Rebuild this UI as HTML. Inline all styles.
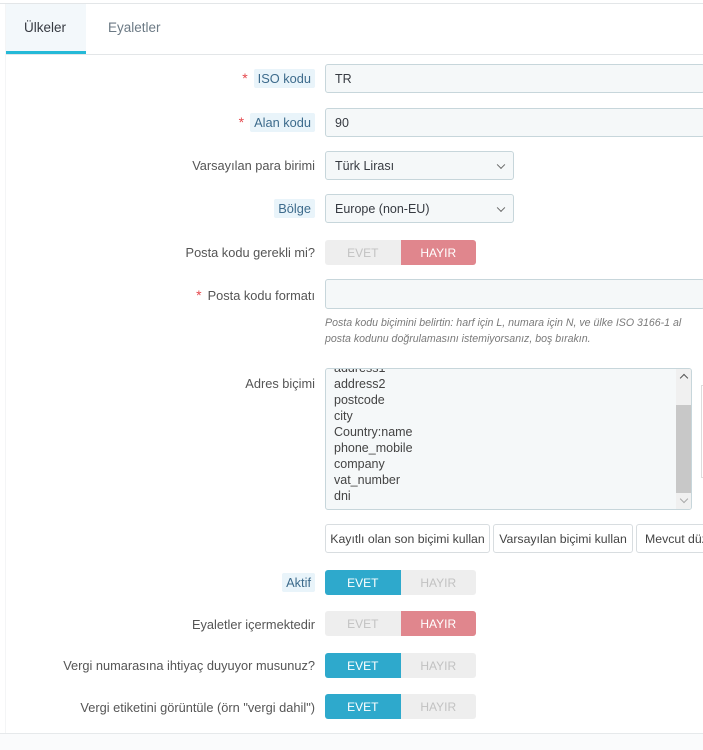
<!DOCTYPE html>
<html><head><meta charset="utf-8"><style>
*{box-sizing:border-box;margin:0;padding:0}
body{width:703px;height:750px;overflow:hidden;background:#fff;font-family:"Liberation Sans",sans-serif;font-size:12.5px;color:#555;position:relative}
.a{position:absolute}
.lbl{position:absolute;right:388px;white-space:nowrap;color:#555;font-size:12.8px}
.tag{background:#e9f4fa;color:#3d6b8c;padding:2px 4px;border-radius:2px}
.star{color:#e5484d;font-size:14px;margin-right:6px}
.inp{position:absolute;left:325px;background:#f5f8f9;border:1px solid #c7d6db;border-radius:3px;padding-left:9px;color:#363a41;display:flex;align-items:center}
.sel::after{content:"";position:absolute;right:9px;top:50%;width:5px;height:5px;border-right:1.3px solid #666;border-bottom:1.3px solid #666;transform:translateY(-70%) rotate(45deg)}
.tg{position:absolute;left:325px;width:151px;height:25px;display:flex;border-radius:3px;overflow:hidden;font-size:12px}
.tg div{flex:1;display:flex;align-items:center;justify-content:center}
.off{background:#eee;color:#c2c2c2}
.on{background:#2ea9cc;color:#fff}
.no{background:#e0868d;color:#fff}
.btn{position:absolute;top:524px;height:29px;border:1px solid #d8dde0;border-radius:3px;background:#fff;color:#444;display:flex;align-items:center;justify-content:center;white-space:nowrap;font-size:12.3px}
</style></head><body>
<div class="a" style="left:0;top:3px;width:703px;height:1px;background:#e3e6e8"></div>
<div class="a" style="left:5px;top:4px;width:1px;height:730px;background:#f4f5f6"></div>
<div class="a" style="left:6px;top:4px;width:80px;height:50px;background:#f3f8fb"></div>
<div class="a" style="left:6px;top:51px;width:80px;height:3px;background:#25b9d7"></div>
<div class="a" style="left:24px;top:20px;font-size:13.5px;color:#363a41">Ülkeler</div>
<div class="a" style="left:108px;top:20px;font-size:13.5px;color:#6c7a85">Eyaletler</div>
<div class="a" style="left:6px;top:54px;width:697px;height:1px;background:#e3e6e8"></div>

<div class="lbl" style="top:70px"><span class="star">*</span><span class="tag">ISO kodu</span></div>
<div class="inp" style="top:64px;width:380px;height:29px">TR</div>
<div class="lbl" style="top:114px"><span class="star">*</span><span class="tag">Alan kodu</span></div>
<div class="inp" style="top:108px;width:380px;height:29px">90</div>

<div class="lbl" style="top:158px">Varsayılan para birimi</div>
<div class="inp sel" style="top:151px;width:189px;height:29px">Türk Lirası</div>
<div class="lbl" style="top:201px"><span class="tag">Bölge</span></div>
<div class="inp sel" style="top:194px;width:189px;height:29px">Europe (non-EU)</div>

<div class="lbl" style="top:245px">Posta kodu gerekli mi?</div>
<div class="tg" style="top:240px"><div class="off">EVET</div><div class="no">HAYIR</div></div>

<div class="lbl" style="top:287px"><span class="star">*</span>Posta kodu formatı</div>
<div class="inp" style="top:279px;width:380px;height:30px"></div>
<div class="a" style="left:325px;top:315px;font-size:10.6px;font-style:italic;color:#7a7a7a;line-height:16px;white-space:nowrap">Posta kodu biçimini belirtin: harf için L, numara için N, ve ülke ISO 3166-1 al<br>posta kodunu doğrulamasını istemiyorsanız, boş bırakın.</div>

<div class="lbl" style="top:376px">Adres biçimi</div>
<div class="a" style="left:325px;top:368px;width:367px;height:142px;background:#f5f8f9;border:1px solid #c7d6db;border-radius:3px;overflow:hidden">
<div class="a" style="left:8px;top:-9px;line-height:16px;color:#444;font-size:12.5px">address1<br>address2<br>postcode<br>city<br>Country:name<br>phone_mobile<br>company<br>vat_number<br>dni</div>
<div class="a" style="right:0;top:0;width:15px;height:140px;background:#f0f0f0"></div>
<div class="a" style="right:0;top:36px;width:15px;height:88px;background:#c8c8c8"></div>
<div class="a" style="right:4px;top:6px;width:6px;height:6px;border-left:1.5px solid #555;border-top:1.5px solid #555;transform:rotate(45deg)"></div>
<div class="a" style="right:4px;top:127px;width:6px;height:6px;border-right:1.3px solid #aaa;border-bottom:1.3px solid #aaa;transform:rotate(45deg)"></div>
</div>
<div class="a" style="left:701px;top:385px;width:4px;height:93px;border:1px solid #ddd;border-right:none"></div>

<div class="btn" style="left:325px;width:165px">Kayıtlı olan son biçimi kullan</div>
<div class="btn" style="left:493px;width:140px">Varsayılan biçimi kullan</div>
<div class="btn" style="left:636px;width:80px;justify-content:flex-start;padding-left:8px">Mevcut düz</div>

<div class="lbl" style="top:575px"><span class="tag">Aktif</span></div>
<div class="tg" style="top:570px"><div class="on">EVET</div><div class="off">HAYIR</div></div>
<div class="lbl" style="top:617px">Eyaletler içermektedir</div>
<div class="tg" style="top:611px"><div class="off">EVET</div><div class="no">HAYIR</div></div>
<div class="lbl" style="top:658px">Vergi numarasına ihtiyaç duyuyor musunuz?</div>
<div class="tg" style="top:653px"><div class="on">EVET</div><div class="off">HAYIR</div></div>
<div class="lbl" style="top:700px">Vergi etiketini görüntüle (örn "vergi dahil")</div>
<div class="tg" style="top:694px"><div class="on">EVET</div><div class="off">HAYIR</div></div>

<div class="a" style="left:0;top:733px;width:703px;height:1px;background:#e6e9eb"></div>
<div class="a" style="left:0;top:734px;width:703px;height:16px;background:#fafbfc"></div>
</body></html>
